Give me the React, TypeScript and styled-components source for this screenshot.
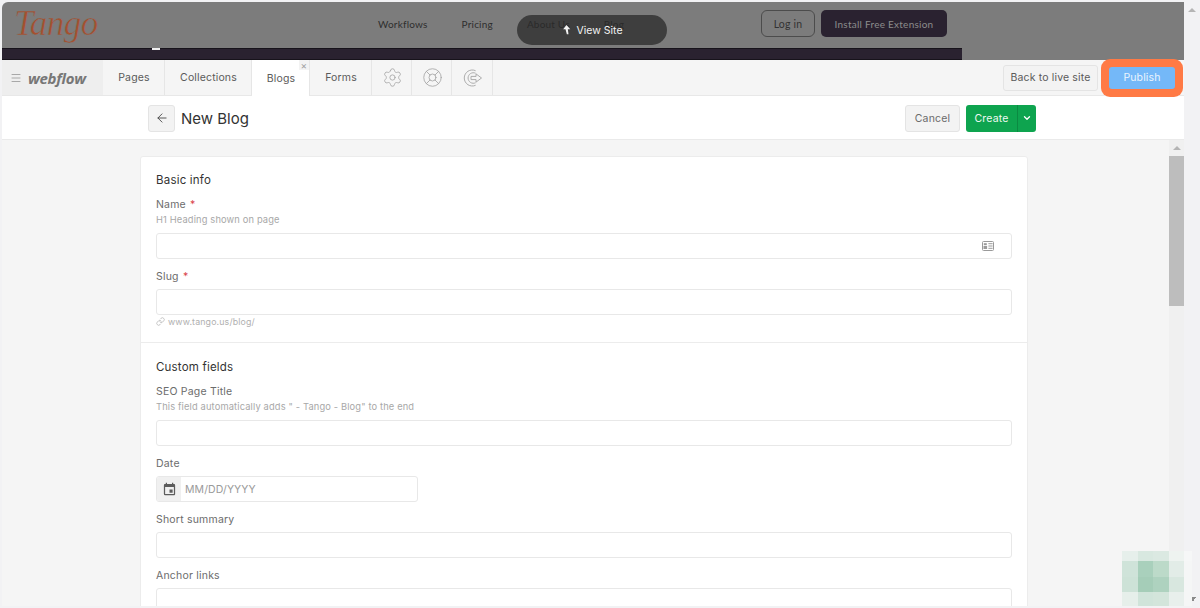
import { ArrowLeft, ChevronDown, Link, LifeBuoy, Menu, Settings } from "lucide-react";
import { MdEvent } from "react-icons/md";
import styled, { createGlobalStyle } from "styled-components";

const GlobalStyle = createGlobalStyle`
  html, body {
    margin: 0;
    padding: 0;
    overflow: hidden;
    background: #f2f2f4;
  }
  * {
    box-sizing: border-box;
  }
`;

const MOSAIC = [
  ["#e6efeb", "#d8e8e0", "#dbe9e2", "#eef3f0", "#f6f7f7"],
  ["#cfe3d9", "#a9d0bc", "#bcdac9", "#e2ece7", "#f5f6f6"],
  ["#cde2d7", "#a5cdb8", "#aed2bf", "#d8e7df", "#f5f6f6"],
  ["#e6efea", "#d0e4da", "#d3e5db", "#e8efec", "#f5f6f6"],
];

const NAV_LINKS = ["Workflows", "Pricing", "About Us", "Blog"];

const App = () => {
  return (
    <Page>
      <GlobalStyle />
      <Window>
        <PreviewSite>
          <SiteNav>
            <Logo>Tango</Logo>
            <NavLinks>
              {NAV_LINKS.map((link) => (
                <NavLink key={link}>{link}</NavLink>
              ))}
            </NavLinks>
            <LoginButton>Log in</LoginButton>
            <InstallButton>Install Free Extension</InstallButton>
          </SiteNav>
          <DarkStrip>
            <Tick />
          </DarkStrip>
          <ViewSitePill>
            <svg width="9" height="10" viewBox="0 0 10 12">
              <path d="M5 0 L9.5 5 L6.6 5 L7.4 11 L5.4 11 L3.8 5 L1 5 Z" fill="#f2f2f2" />
            </svg>
            View Site
          </ViewSitePill>
        </PreviewSite>

        <Toolbar>
          <Brand>
            <Menu size={12} strokeWidth={1.4} color="#8a8a8a" />
            <Wordmark>webflow</Wordmark>
          </Brand>
          <Tab $width={62}>Pages</Tab>
          <Tab $width={87}>Collections</Tab>
          <Tab $width={58} $active>
            Blogs
            <TabClose>×</TabClose>
          </Tab>
          <Tab $width={62}>Forms</Tab>
          <Tab $width={40}>
            <Settings size={21} strokeWidth={1} color="#a8a8a8" />
          </Tab>
          <Tab $width={40}>
            <LifeBuoy size={21} strokeWidth={1} color="#a8a8a8" />
          </Tab>
          <Tab $width={41}>
            <svg width="20" height="20" viewBox="0 0 19 19" fill="none" stroke="#a8a8a8" strokeWidth="0.9">
              <path d="M12 2.6 A7.6 7.6 0 1 0 12 16.4" />
              <path d="M12 5 A5 5 0 1 0 12 14" />
              <path d="M7.6 8 H12.4 V5.6 L17.6 9.5 L12.4 13.4 V11 H7.6 Z" />
            </svg>
          </Tab>
          <ToolbarActions>
            <BackLiveButton>Back to live site</BackLiveButton>
            <PublishButton>Publish</PublishButton>
          </ToolbarActions>
        </Toolbar>

        <Header>
          <BackButton>
            <ArrowLeft size={14} strokeWidth={1.5} color="#444" />
          </BackButton>
          <HeaderTitle>New Blog</HeaderTitle>
          <CancelButton>Cancel</CancelButton>
          <CreateGroup>
            <CreateButton>Create</CreateButton>
            <CreateCaret>
              <ChevronDown size={10} strokeWidth={3.2} color="#fff" />
            </CreateCaret>
          </CreateGroup>
        </Header>

        <Content>
          <FormArea>
            <Card>
              <Section>
                <SectionTitle>Basic info</SectionTitle>
                <FieldLabel $tight>
                  Name <Required>*</Required>
                </FieldLabel>
                <Hint>H1 Heading shown on page</Hint>
                <TextInput>
                  <svg width="12" height="10" viewBox="0 0 12 10" fill="none">
                    <rect x="0.5" y="0.5" width="11" height="9" rx="1" stroke="#9a9a9a" />
                    <rect x="1.8" y="2.2" width="3" height="2" fill="#9a9a9a" />
                    <rect x="1.5" y="5" width="3.6" height="3" fill="#9a9a9a" />
                    <path d="M6.4 2.7H10.6M6.4 5H10.6M6.4 7.3H10.6" stroke="#9a9a9a" />
                  </svg>
                </TextInput>
                <FieldLabel $top={12}>
                  Slug <Required>*</Required>
                </FieldLabel>
                <TextInput />
                <SlugHint>
                  <Link size={9} strokeWidth={1.6} color="#a5a5a5" />
                  www.tango.us/blog/
                </SlugHint>
              </Section>
              <Section>
                <SectionTitle>Custom fields</SectionTitle>
                <FieldLabel $tight>SEO Page Title</FieldLabel>
                <Hint>This field automatically adds " - Tango - Blog" to the end</Hint>
                <TextInput />
                <FieldLabel $top={12}>Date</FieldLabel>
                <DateInput>
                  <DateAddon>
                    <MdEvent size={15} color="#5c5c5c" />
                  </DateAddon>
                  <DatePlaceholder>MM/DD/YYYY</DatePlaceholder>
                </DateInput>
                <FieldLabel $top={12}>Short summary</FieldLabel>
                <TextInput />
                <FieldLabel $top={12}>Anchor links</FieldLabel>
                <TextInput />
              </Section>
            </Card>
          </FormArea>
          <InnerScrollbar>
            <ScrollArrow />
            <ScrollThumb />
          </InnerScrollbar>
        </Content>
      </Window>
      <OuterRail>
        <ScrollArrow />
      </OuterRail>
      <Mosaic>
        {MOSAIC.flat().map((color, i) => (
          <MosaicCell key={i} $color={color} />
        ))}
      </Mosaic>
      <ResizeCorner />
    </Page>
  );
};

export default App;

const Page = styled.div`
  position: relative;
  display: flex;
  width: 1200px;
  height: 608px;
  padding: 2px 0 2px 2px;
  overflow: hidden;
  background-color: #f2f2f4;
  font-family: Inter, "Liberation Sans", sans-serif;
`;

const Window = styled.div`
  display: flex;
  flex-direction: column;
  width: 1182px;
  height: 604px;
  overflow: hidden;
  border-radius: 6px 0 0 0;
  background-color: #f5f5f5;
`;

const PreviewSite = styled.div`
  position: relative;
  flex: none;
  height: 58px;
  background-color: #7c7c7c;
`;

const SiteNav = styled.div`
  display: flex;
  align-items: center;
  width: 960px;
  height: 46px;
  padding: 0 15px 3px 12px;
`;

const Logo = styled.div`
  width: 364px;
  color: #a5502f;
  font-family: "Liberation Serif", serif;
  font-size: 35px;
  font-style: italic;
  line-height: 38px;
  letter-spacing: -0.5px;
  -webkit-text-stroke: 0.6px #7c7c7c;
  paint-order: fill stroke;
`;

const NavLinks = styled.div`
  display: flex;
  flex: 1;
  gap: 34px;
  font-family: Lato, sans-serif;
`;

const NavLink = styled.span`
  color: #2e2e2e;
  font-size: 10px;
  letter-spacing: 0.2px;
`;

const LoginButton = styled.div`
  display: flex;
  align-items: center;
  justify-content: center;
  width: 54px;
  height: 27px;
  border: 1px solid #4c4c4c;
  border-radius: 6px;
  color: #333;
  font-family: Lato, sans-serif;
  font-size: 10.5px;
  letter-spacing: 0.2px;
`;

const InstallButton = styled.div`
  display: flex;
  align-items: center;
  justify-content: center;
  width: 126px;
  height: 27px;
  margin-left: 6px;
  border-radius: 5px;
  background-color: #2a2230;
  color: #8c8c8c;
  font-family: Lato, sans-serif;
  font-size: 10px;
  letter-spacing: 0.25px;
`;

const DarkStrip = styled.div`
  position: relative;
  width: 960px;
  height: 12px;
  border-top: 1px solid #17131b;
  border-bottom: 1px solid #17131b;
  background-color: #2a2230;
`;

const Tick = styled.div`
  position: absolute;
  top: -1px;
  left: 150px;
  width: 8px;
  height: 2px;
  background-color: #efefef;
`;

const ViewSitePill = styled.div`
  position: absolute;
  top: 13px;
  left: 515px;
  display: flex;
  align-items: center;
  justify-content: center;
  gap: 6px;
  width: 150px;
  height: 30px;
  border-radius: 15px;
  background-color: rgba(40, 40, 40, 0.74);
  color: #f2f2f2;
  font-size: 10.5px;
`;

const Toolbar = styled.div`
  display: flex;
  flex: none;
  height: 36px;
  border-bottom: 1px solid #e8e8e8;
  background-color: #f5f5f5;
`;

const Brand = styled.div`
  display: flex;
  align-items: center;
  gap: 6px;
  width: 101px;
  padding-left: 8px;
  background-color: #eeeeee;
`;

const Wordmark = styled.span`
  color: #777;
  font-family: "Open Sans", sans-serif;
  font-size: 15px;
  font-style: italic;
  font-weight: 700;
  letter-spacing: -0.3px;
`;

const Tab = styled.div<{ $width: number; $active?: boolean }>`
  position: relative;
  display: flex;
  flex: none;
  align-items: center;
  justify-content: center;
  width: ${(p) => p.$width}px;
  height: ${(p) => (p.$active ? "36px" : "35px")};
  padding-left: 1px;
  border-right: 1px solid #e6e6e6;
  background-color: ${(p) => (p.$active ? "#ffffff" : "transparent")};
  color: #5a5a5a;
  font-size: 10.5px;
  letter-spacing: 0.15px;
`;

const TabClose = styled.span`
  position: absolute;
  top: 0;
  right: 0;
  display: flex;
  align-items: center;
  justify-content: center;
  width: 10px;
  height: 10px;
  background-color: #f3f3f3;
  color: #a0a0a0;
  font-size: 10px;
  line-height: 10px;
`;

const ToolbarActions = styled.div`
  display: flex;
  flex: 1;
  align-items: center;
  justify-content: flex-end;
  gap: 11px;
  padding-right: 9px;
`;

const BackLiveButton = styled.div`
  display: flex;
  align-items: center;
  justify-content: center;
  width: 95px;
  height: 26px;
  border: 1px solid #e4e4e4;
  border-radius: 3px;
  background-color: #f3f3f3;
  color: #5a5a5a;
  font-size: 10.5px;
  letter-spacing: 0.15px;
`;

const PublishButton = styled.div`
  position: relative;
  z-index: 2;
  display: flex;
  align-items: center;
  justify-content: center;
  width: 66px;
  height: 22px;
  border-radius: 3px;
  background-color: #74b8f8;
  box-shadow: 0 0 0 8px #ff7a45;
  color: #eaf4fd;
  font-size: 10.5px;
  letter-spacing: 0.15px;
`;

const Header = styled.div`
  display: flex;
  flex: none;
  align-items: center;
  height: 44px;
  padding: 1px 148px 0 146px;
  border-bottom: 1px solid #eaeaea;
  background-color: #ffffff;
`;

const BackButton = styled.div`
  display: flex;
  align-items: center;
  justify-content: center;
  width: 27px;
  height: 27px;
  border: 1px solid #e4e4e4;
  border-radius: 3px;
  background-color: #f3f3f3;
`;

const HeaderTitle = styled.div`
  flex: 1;
  margin-left: 6px;
  color: #333;
  font-size: 15px;
`;

const CancelButton = styled.div`
  display: flex;
  align-items: center;
  justify-content: center;
  width: 55px;
  height: 27px;
  border: 1px solid #e4e4e4;
  border-radius: 3px;
  background-color: #f3f3f3;
  color: #6a6a6a;
  font-size: 10.5px;
  letter-spacing: 0.2px;
`;

const CreateGroup = styled.div`
  display: flex;
  height: 27px;
  margin-left: 6px;
  border-radius: 3px;
  overflow: hidden;
  background-color: #0ea44f;
`;

const CreateButton = styled.div`
  display: flex;
  align-items: center;
  justify-content: center;
  width: 52px;
  border-right: 1px solid #0b8a42;
  color: #eefaf2;
  font-size: 10.5px;
  letter-spacing: 0.2px;
`;

const CreateCaret = styled.div`
  display: flex;
  align-items: center;
  justify-content: center;
  width: 18px;
`;

const Content = styled.div`
  display: flex;
  flex: 1;
  min-height: 0;
`;

const FormArea = styled.div`
  flex: 1;
  min-width: 0;
  padding: 16px 0 0 138px;
`;

const Card = styled.div`
  width: 888px;
  border: 1px solid #ececec;
  border-radius: 3px;
  background-color: #ffffff;
`;

const Section = styled.div`
  padding: 15px;
  border-bottom: 1px solid #ececec;

  & + & {
    padding-top: 16px;
  }
`;

const SectionTitle = styled.div`
  margin-bottom: 11px;
  color: #333;
  font-size: 11.5px;
  line-height: 16px;
  letter-spacing: 0.2px;
`;

const FieldLabel = styled.div<{ $top?: number; $tight?: boolean }>`
  margin-top: ${(p) => p.$top ?? 0}px;
  margin-bottom: ${(p) => (p.$tight ? 3 : 6)}px;
  color: #6c6c6c;
  font-size: 10.5px;
  line-height: 12px;
  letter-spacing: 0.2px;
`;

const Required = styled.span`
  color: #d9434a;
  margin-left: 1px;
`;

const Hint = styled.div`
  margin-bottom: 8px;
  color: #a8a8a8;
  font-size: 9.3px;
  line-height: 11px;
  letter-spacing: 0.15px;
`;

const TextInput = styled.div`
  display: flex;
  align-items: center;
  justify-content: flex-end;
  height: 26px;
  padding-right: 17px;
  border: 1px solid #e8e8e8;
  border-radius: 3px;
  background-color: #ffffff;
`;

const SlugHint = styled.div`
  display: flex;
  align-items: center;
  gap: 3px;
  margin-top: 1px;
  color: #b0b0b0;
  font-size: 8.8px;
  line-height: 11px;
  letter-spacing: 0.15px;
`;

const DateInput = styled.div`
  display: flex;
  width: 262px;
  height: 26px;
  border: 1px solid #e8e8e8;
  border-radius: 3px;
  overflow: hidden;
`;

const DateAddon = styled.div`
  display: flex;
  align-items: center;
  justify-content: center;
  width: 24px;
  background-color: #f0f0f0;
`;

const DatePlaceholder = styled.div`
  display: flex;
  align-items: center;
  padding-left: 4px;
  color: #9a9a9a;
  font-size: 10.5px;
  letter-spacing: 0.1px;
`;

const InnerScrollbar = styled.div`
  display: flex;
  flex: none;
  flex-direction: column;
  width: 15px;
  background-color: #f0f0f0;
`;

const ScrollArrow = styled.div`
  flex: none;
  width: 0;
  height: 0;
  margin: 6px auto 4px;
  border-right: 4px solid transparent;
  border-bottom: 4px solid #b5b5b5;
  border-left: 4px solid transparent;
`;

const ScrollThumb = styled.div`
  height: 150px;
  margin-top: 2px;
  background-color: #bdbdbd;
`;

const OuterRail = styled.div`
  flex: 1;
  background-color: #f2f2f4;
`;

const Mosaic = styled.div`
  position: absolute;
  top: 551px;
  left: 1122px;
  display: grid;
  grid-template-columns: 15.5px 15.5px 15.5px 15.5px 8px;
  grid-template-rows: 10px 15.5px 15.5px 14px;
`;

const MosaicCell = styled.div<{ $color: string }>`
  background-color: ${(p) => p.$color};
`;

const ResizeCorner = styled.div`
  position: absolute;
  top: 597px;
  left: 1192px;
  width: 5px;
  height: 5px;
  background: linear-gradient(135deg, #8a8a8a 50%, transparent 50%);
`;
